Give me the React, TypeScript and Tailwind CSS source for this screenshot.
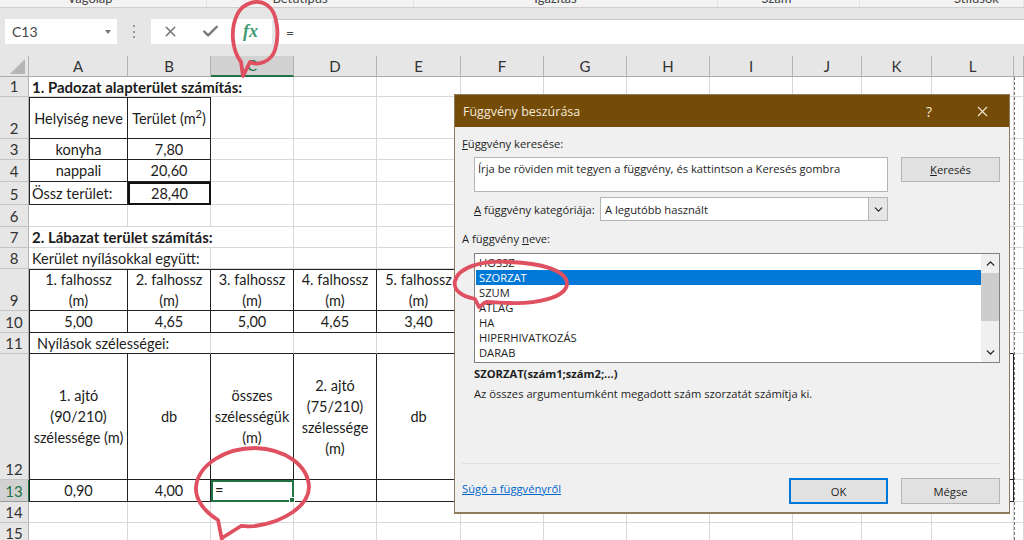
import type { ReactNode } from "react";
import { Check, ChevronDown, ChevronUp, X } from "lucide-react";
import { twMerge } from "tailwind-merge";

const gridCols =
  "grid grid-rows-[100%] grid-cols-[29px_99px_83px_83px_83px_84px_83px_83px_83px_83px_69px_70px_82px_10px]";

const columns = ["A", "B", "C", "D", "E", "F", "G", "H", "I", "J", "K", "L", "M"];

const dark = "border-r-[#222] border-b-[#222]";
const mid = "flex items-center justify-center text-center";

type CellDef = { text?: ReactNode; span?: string; n?: number; cls?: string };

function Row({ num, h, cells, active }: { num: number; h: string; cells: CellDef[]; active?: boolean }) {
  const used = cells.reduce((sum, c) => sum + (c.n ?? 1), 0);
  const blanks = Array.from({ length: Math.max(0, 13 - used) });
  return (
    <div className={`${gridCols} ${h}`}>
      <div
        className={`flex items-end justify-center border-b border-r text-[15px] leading-[20px] ${
          active
            ? "border-b-[#9a9a9a] border-r-[#217346] bg-[#d2d2d2] text-[#217346]"
            : "border-b-[#c4c4c4] border-r-[#b4b4b4] bg-[#e6e6e6] text-[#333]"
        }`}
      >
        {num}
      </div>
      {cells.map((c, i) => (
        <div
          key={i}
          className={twMerge(
            "min-h-0 min-w-0 whitespace-nowrap border-b border-r border-b-[#d8d8d8] border-r-[#d8d8d8] text-[14.5px] leading-[21px] text-[#1c1c1c]",
            c.span,
            c.cls,
          )}
        >
          {c.text}
        </div>
      ))}
      {blanks.map((_, i) => (
        <div key={i} className="border-b border-r border-b-[#d8d8d8] border-r-[#d8d8d8]" />
      ))}
    </div>
  );
}

function Sheet() {
  const leftEdge = "border-l border-l-[#222]";
  const topEdge = "border-t border-t-[#222]";
  const c = (text: ReactNode, cls = "") => ({ text, cls: `${mid} ${dark} ${cls}` });
  const blankDark = { cls: dark };
  return (
    <div>
      <div className={`${gridCols} h-[21px] bg-[#e6e6e6] text-[15px] text-[#333]`}>
        <div className="flex items-end justify-end border-b border-r border-b-[#ababab] border-r-[#b4b4b4] pb-[2px] pr-[3px]">
          <svg width="15" height="15" viewBox="0 0 15 15">
            <polygon points="15,0 15,15 0,15" fill="#b5b5b5" />
          </svg>
        </div>
        {columns.map((col) =>
          col === "C" ? (
            <div key={col} className={`${mid} border-b-2 border-r border-b-[#217346] border-r-[#b4b4b4] bg-[#d2d2d2] text-[#217346]`}>
              {col}
            </div>
          ) : (
            <div key={col} className={`${mid} border-b border-r border-b-[#ababab] border-r-[#b4b4b4]`}>
              {col === "M" ? "" : col}
            </div>
          ),
        )}
      </div>

      <Row num={1} h="h-[20px]" cells={[{ text: "1. Padozat alapterület számítás:", n: 3, span: "col-span-3", cls: "pl-[3px] text-[15px] font-bold leading-[21px]" }]} />
      <Row
        num={2}
        h="h-[42px]"
        cells={[
          c("Helyiség neve", `${leftEdge} ${topEdge}`),
          c(
            <span>
              Terület (m<sup className="text-[11px]">2</sup>)
            </span>,
            topEdge,
          ),
        ]}
      />
      <Row num={3} h="h-[21px]" cells={[c("konyha", leftEdge), c("7,80")]} />
      <Row num={4} h="h-[22px]" cells={[c("nappali", leftEdge), c("20,60")]} />
      <Row
        num={5}
        h="h-[23px]"
        cells={[
          { text: "Össz terület:", cls: `flex items-center ${dark} ${leftEdge} pl-[2px]` },
          { text: "28,40", cls: `${mid} border-2 border-[#111]` },
        ]}
      />
      <Row num={6} h="h-[22px]" cells={[]} />
      <Row num={7} h="h-[21px]" cells={[{ text: "2. Lábazat terület számítás:", n: 3, span: "col-span-3", cls: "pl-[3px] text-[15px] font-bold leading-[21px]" }]} />
      <Row num={8} h="h-[21px]" cells={[{ text: "Kerület nyílásokkal együtt:", n: 2, span: "col-span-2", cls: "pl-[3px]" }]} />
      <Row
        num={9}
        h="h-[42px]"
        cells={[
          c(<>1. falhossz<br />(m)</>, `${leftEdge} ${topEdge}`),
          c(<>2. falhossz<br />(m)</>, topEdge),
          c(<>3. falhossz<br />(m)</>, topEdge),
          c(<>4. falhossz<br />(m)</>, topEdge),
          c(<>5. falhossz<br />(m)</>, topEdge),
        ]}
      />
      <Row num={10} h="h-[22px]" cells={[c("5,00", leftEdge), c("4,65"), c("5,00"), c("4,65"), c("3,40")]} />
      <Row
        num={11}
        h="h-[21px]"
        cells={[
          { text: "Nyílások szélességei:", n: 2, span: "col-span-2", cls: `${leftEdge} border-b-[#222] pl-[7px]` },
          ...Array.from({ length: 10 }, () => ({ cls: "border-b-[#222]" })),
        ]}
      />
      <Row
        num={12}
        h="h-[126px]"
        cells={[
          c(<>1. ajtó<br />(90/210)<br />szélessége (m)</>, leftEdge),
          c("db"),
          c(<>összes<br />szélességük<br />(m)</>),
          c(<>2. ajtó<br />(75/210)<br />szélessége<br />(m)</>),
          c("db"),
          ...Array.from({ length: 7 }, () => blankDark),
        ]}
      />
      <Row
        num={13}
        h="h-[22px]"
        active
        cells={[
          c("0,90", leftEdge),
          c("4,00"),
          {
            text: (
              <>
                <span className="pl-[2px]">=</span>
                <span className="absolute -bottom-[3px] -right-[3px] h-[6px] w-[6px] border border-white bg-[#217346]" />
              </>
            ),
            cls: "relative border-2 border-[#217346] leading-[17px]",
          },
          ...Array.from({ length: 9 }, () => blankDark),
        ]}
      />
      <Row num={14} h="h-[21px]" cells={[]} />
      <Row num={15} h="h-[21px]" cells={[]} />
    </div>
  );
}

function Ribbon() {
  const groups = [
    { label: "Vágólap", w: "w-[207px]", pr: "pr-[26px]" },
    { label: "Betűtípus", w: "w-[207px]", pr: "pr-[20px]" },
    { label: "Igazítás", w: "w-[304px]", pr: "pr-[20px]" },
    { label: "Szám", w: "w-[142px]", pr: "pr-[24px]" },
    { label: "Stílusok", w: "w-[164px]", pr: "pl-[70px]" },
  ];
  return (
    <div className="flex h-[8px] overflow-hidden border-b border-[#cfcfcf] bg-[#f3f3f3] text-[13px] leading-none text-[#444]">
      {groups.map((g) => (
        <div key={g.label} className={`flex justify-center border-r border-[#e2e2e2] ${g.w} ${g.pr}`}>
          <span className="-mt-[8px]">{g.label}</span>
        </div>
      ))}
    </div>
  );
}

function FormulaBar() {
  return (
    <div className="flex h-[48px] items-start bg-[#e6e6e6] pt-[11px]">
      <div className="ml-[5px] flex h-[25px] w-[112px] items-center justify-between bg-white pl-[7px] pr-[6px] text-[14px] text-[#444]">
        C13
        <span className="h-0 w-0 border-x-[3px] border-t-[4px] border-x-transparent border-t-[#777]" />
      </div>
      <div className="ml-[15px] mt-[6px] flex h-[13px] w-[4px] flex-col items-center justify-between">
        <span className="h-[2px] w-[2px] bg-[#999]" />
        <span className="h-[2px] w-[2px] bg-[#999]" />
        <span className="h-[2px] w-[2px] bg-[#999]" />
      </div>
      <div className="ml-[15px] flex h-[25px] w-[121px] items-center bg-white pl-[11px] text-[#777]">
        <X size={17} strokeWidth={2.2} />
        <Check size={19} strokeWidth={3} className="ml-[22px]" />
        <span className="ml-[23px] font-['Liberation_Serif',serif] text-[18px] font-bold italic text-[#3f9a72]">fx</span>
      </div>
      <div className="ml-[6px] flex h-[25px] flex-1 items-center border-t border-[#c8c8c8] bg-white pl-[8px] text-[14px] text-[#444]">
        =
      </div>
    </div>
  );
}

function Dialog() {
  const names = ["HOSSZ", "SZORZAT", "SZUM", "ÁTLAG", "HA", "HIPERHIVATKOZÁS", "DARAB"];
  return (
    <div className="absolute left-[454px] top-[94px] flex h-[420px] w-[556px] flex-col border border-b-2 border-[#8f7a5c] bg-[#f0f0f0] font-['Open_Sans',sans-serif] text-[11.2px] leading-[15px] text-[#1e1e1e]">
      <div className="flex h-[32px] shrink-0 items-center bg-[#744c07] pl-[8px] text-[12.5px] text-[#f3e9d8]">
        Függvény beszúrása
        <span className="ml-auto text-[14px]">?</span>
        <X size={17} strokeWidth={1.5} className="ml-[42px] mr-[18px]" />
      </div>
      <div className="flex flex-1 flex-col px-[7px] pt-[9px]">
        <div>
          <u>F</u>üggvény keresése:
        </div>
        <div className="mt-[6px] flex items-start pl-[12px]">
          <div className="h-[35px] w-[414px] border border-[#b5b5b5] bg-white pl-[3px] pt-[3px]">
            Írja be röviden mit tegyen a függvény, és kattintson a Keresés gombra
          </div>
          <div className="ml-[13px] flex h-[25px] w-[99px] items-center justify-center border border-[#b5b5b5] bg-[#e1e1e1]">
            <span>
              <u>K</u>eresés
            </span>
          </div>
        </div>
        <div className="mt-[5px] flex items-center pl-[12px]">
          <span className="w-[126px]">
            <u>A</u> függvény kategóriája:
          </span>
          <div className="flex h-[24px] w-[288px] items-center border border-[#b5b5b5] bg-white pl-[4px]">
            A legutóbb használt
            <span className="ml-auto flex h-full w-[19px] items-center justify-center border-l border-[#b5b5b5] bg-[#e6e6e6]">
              <ChevronDown size={13} />
            </span>
          </div>
        </div>
        <div className="mt-[10px]">
          A függvény <u>n</u>eve:
        </div>
        <div className="ml-[12px] mt-[7px] flex h-[110px] w-[526px] border border-[#828282] bg-white pl-[1px]">
          <div className="flex-1 pt-[1px]">
            {names.map((name) => (
              <div
                key={name}
                className={`h-[15px] pl-[3px] ${name === "SZORZAT" ? "bg-[#0078d7] text-white" : ""}`}
              >
                {name}
              </div>
            ))}
          </div>
          <div className="flex w-[18px] flex-col items-center justify-between bg-[#f0f0f0]">
            <div className="flex h-[19px] w-full items-center justify-center">
              <ChevronUp size={13} strokeWidth={2.5} />
            </div>
            <div className="h-[48px] w-full bg-[#cdcdcd]" />
            <div className="mt-auto flex h-[19px] w-full items-center justify-center">
              <ChevronDown size={13} strokeWidth={2.5} />
            </div>
          </div>
        </div>
        <div className="ml-[12px] mt-[3px] font-bold">SZORZAT(szám1;szám2;...)</div>
        <div className="ml-[12px] mt-[5px]">Az összes argumentumként megadott szám szorzatát számítja ki.</div>
        <div className="mt-[62px] h-px w-[538px] bg-[#dfdfdf]" />
        <div className="mt-[14px] flex items-start">
          <span className="mt-[3px] text-[#0066cc] underline">Súgó a függvényről</span>
          <div className="ml-auto mr-[2px] flex gap-[13px]">
            <div className="flex h-[26px] w-[99px] items-center justify-center border-2 border-[#0078d7] bg-[#e1e1e1]">OK</div>
            <div className="flex h-[26px] w-[99px] items-center justify-center border border-[#b5b5b5] bg-[#e1e1e1]">Mégse</div>
          </div>
        </div>
      </div>
    </div>
  );
}

function Annotations() {
  return (
    <svg className="pointer-events-none absolute left-0 top-0" width="1024" height="540" viewBox="0 0 1024 540" fill="none">
      <g stroke="#df5060" strokeWidth="3.8" strokeLinejoin="round" strokeLinecap="round">
        <path d="M243 76 L241 62 C232 50 230 30 237 15 C243 2 258 -1 267 5 C279 13 279 38 275 50 C271 62 258 66 250 62 Z" />
        <path d="M479 307 L475 299 C461 296 453 290 455 281 C458 268 480 260 510 262 C540 263 567 270 567 284 C566 298 535 304 510 303 C500 303 492 302 486 302 Z" />
        <path d="M222 540 L218 520 C205 512 195 500 196 487 C198 465 225 448 255 448 C285 449 308 465 309 487 C309 505 285 522 255 526 C250 527 245 526 241 526 L222 538" />
      </g>
    </svg>
  );
}

export default function App() {
  return (
    <div className="relative h-[540px] w-[1024px] overflow-hidden bg-white font-['Lato',sans-serif]">
      <Ribbon />
      <FormulaBar />
      <Sheet />
      <div className="absolute bottom-0 left-[1014px] top-[77px] border-l border-dashed border-[#777]" />
      <Dialog />
      <Annotations />
    </div>
  );
}
